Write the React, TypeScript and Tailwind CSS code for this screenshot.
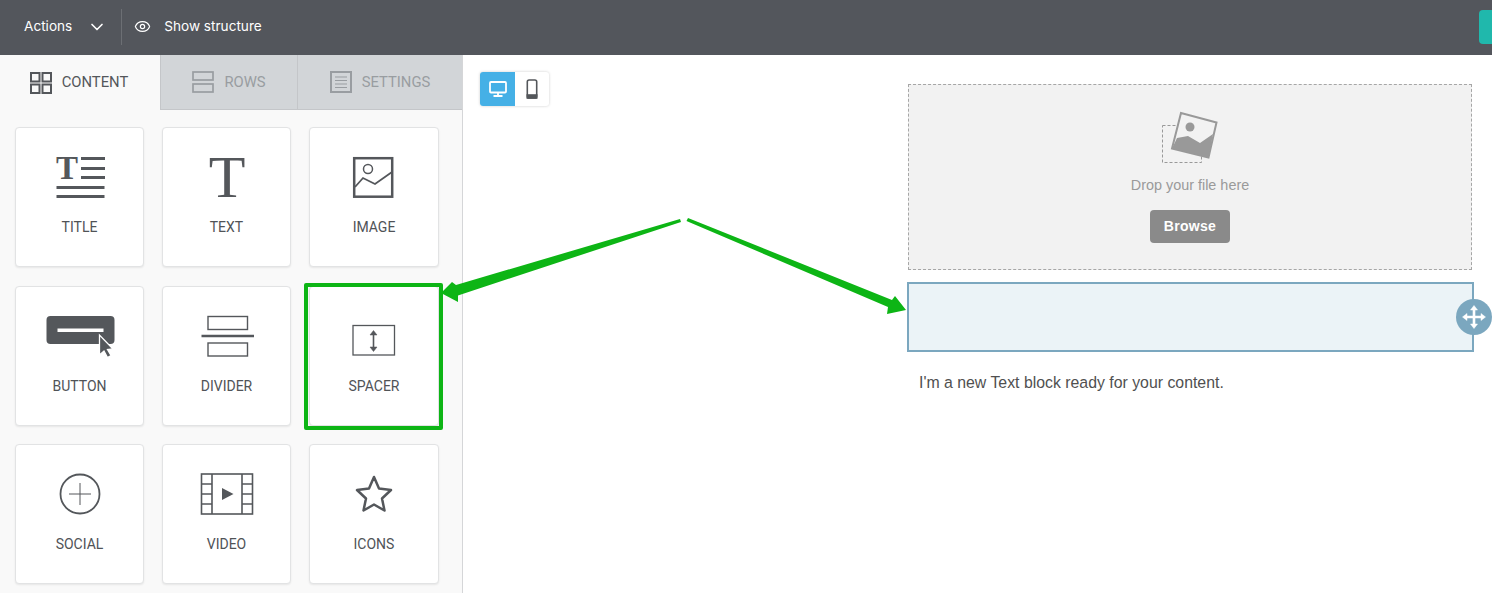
import { ChevronDown, Eye } from 'lucide-react';
import type { ReactNode } from 'react';

const INK = '#54575b';

function TitleIcon() {
  return (
    <svg width="80" height="60" fill={INK} className="overflow-visible">
      <text x="16" y="32" fontFamily="'Liberation Serif', serif" fontWeight="700" fontSize="33">T</text>
      <rect x="41" y="10" width="24" height="3" />
      <rect x="41" y="20" width="24" height="3" />
      <rect x="41" y="29" width="24" height="3" />
      <rect x="16.5" y="39" width="48" height="3" />
      <rect x="16.5" y="48" width="48" height="3" />
    </svg>
  );
}

function TextIcon() {
  return (
    <svg width="80" height="60" fill={INK} className="overflow-visible">
      <text x="40" y="50" textAnchor="middle" fontFamily="'Liberation Serif', serif" fontSize="60">T</text>
    </svg>
  );
}

function ImageIcon() {
  return (
    <svg width="80" height="60" fill="none" stroke={INK}>
      <rect x="20.2" y="11.2" width="38" height="38.5" strokeWidth="2.5" />
      <circle cx="34" cy="22" r="4.5" strokeWidth="1.5" />
      <polyline points="21,40 29,31 41,37 58,25" strokeWidth="1.8" />
    </svg>
  );
}

function ButtonIcon() {
  return (
    <svg width="80" height="60">
      <rect x="6.5" y="10" width="68" height="28" rx="4" fill={INK} />
      <rect x="17.5" y="22.5" width="46" height="3.5" fill="#fff" />
      <path d="M59.5 29 L59.5 49 L64 45 L67.5 51.5 L71 49.5 L67.5 43.5 L73 43 Z" fill={INK} stroke="#fff" strokeWidth="1.3" />
    </svg>
  );
}

function DividerIcon() {
  return (
    <svg width="80" height="60" fill="none" stroke={INK}>
      <rect x="21" y="10.5" width="39.5" height="13" strokeWidth="1.4" />
      <line x1="14.5" y1="30" x2="67" y2="30" strokeWidth="2.6" />
      <rect x="21" y="37" width="39.5" height="13" strokeWidth="1.4" />
    </svg>
  );
}

function SpacerIcon() {
  return (
    <svg width="80" height="60" fill="none" stroke={INK}>
      <rect x="19" y="19.5" width="41.5" height="29.5" strokeWidth="1.3" />
      <line x1="39.5" y1="27" x2="39.5" y2="43" strokeWidth="1.6" />
      <path d="M36 29 L39.5 24.5 L43 29 Z M36 41 L39.5 45.5 L43 41 Z" fill={INK} strokeWidth="0.5" />
    </svg>
  );
}

function SocialIcon() {
  return (
    <svg width="80" height="60" fill="none" stroke={INK}>
      <circle cx="40" cy="30" r="19.5" strokeWidth="1.8" />
      <line x1="29" y1="30" x2="51" y2="30" strokeWidth="1" />
      <line x1="40" y1="19" x2="40" y2="41" strokeWidth="1" />
    </svg>
  );
}

function VideoIcon() {
  return (
    <svg width="80" height="60" fill="none" stroke={INK} strokeWidth="1.6">
      <rect x="14.5" y="10" width="51" height="40" />
      <path d="M25 10 V50 M55 10 V50 M14.5 20 H25 M14.5 30 H25 M14.5 40 H25 M55 20 H65.5 M55 30 H65.5 M55 40 H65.5" />
      <path d="M35 24 L46.5 30 L35 36 Z" fill={INK} stroke="none" />
    </svg>
  );
}

function StarIcon() {
  return (
    <svg width="80" height="60" fill="none" stroke={INK}>
      <polygon points="40,13 45,24.5 57,26 48,34.5 50.5,46.5 40,40.5 29.5,46.5 32,34.5 23,26 35,24.5" strokeWidth="2.5" strokeLinejoin="round" />
    </svg>
  );
}

function Card({ label, icon, selected }: { label: string; icon: ReactNode; selected?: boolean }) {
  return (
    <div className="relative h-[140px] rounded-[4px] border border-[#e2e3e4] bg-white pt-[19px] flex flex-col items-center shadow-[0_1px_2px_rgba(0,0,0,0.08)]">
      {icon}
      <div className="mt-[10px] text-[14px] leading-5 text-[#505357]">{label}</div>
      {selected && <div className="absolute -left-[6px] -right-[5px] -top-[4px] -bottom-[5px] rounded-[2px] border-4 border-[#0db515]" />}
    </div>
  );
}

function Tab({ label, icon, active, className }: { label: string; icon: ReactNode; active?: boolean; className: string }) {
  return (
    <div className={`flex items-center justify-center gap-[10px] text-[14.8px] ${active ? 'bg-[#f9f9f9] text-[#54575b]' : 'bg-[#d2d5d8] text-[#999da1] border-b border-[#c4c6c9]'} ${className}`}>
      {icon}
      <span>{label}</span>
    </div>
  );
}

export default function App() {
  return (
    <div className="relative h-[593px] w-[1492px] overflow-hidden bg-white font-['Roboto',sans-serif]">
      {/* top bar */}
      <div className="flex h-[55px] items-center bg-[#53565c] pb-[2px] pl-[24px] pr-0 text-[13.6px] text-white font-['Inter',sans-serif]">
        <span>Actions</span>
        <ChevronDown className="ml-[15px] text-white" size={20} strokeWidth={2} />
        <div className="ml-[14px] h-[36px] w-px bg-[#6c6f74]" />
        <Eye className="ml-[12px] text-white" size={17} strokeWidth={1.7} />
        <span className="ml-[13px]">Show structure</span>
        <div className="ml-auto h-[34px] w-[13px] rounded-l-[4px] bg-[#20b8ac]" />
      </div>

      <div className="flex h-[538px]">
        {/* sidebar */}
        <div className="w-[463px] shrink-0 border-r border-[#d5d6d8] bg-[#f9f9f9]">
          <div className="flex h-[55px]">
            <Tab
              active
              label="CONTENT"
              className="w-[160px] pr-[2px]"
              icon={
                <svg width="22" height="22" fill="none" stroke="#54575b" strokeWidth="2">
                  <rect x="1" y="1" width="8.5" height="8.5" />
                  <rect x="12.5" y="1" width="8.5" height="8.5" />
                  <rect x="1" y="12.5" width="8.5" height="8.5" />
                  <rect x="12.5" y="12.5" width="8.5" height="8.5" />
                </svg>
              }
            />
            <Tab
              label="ROWS"
              className="w-[137px] border-l border-[#c4c6c9]"
              icon={
                <svg width="22" height="22" fill="none" stroke="#999da1" strokeWidth="1.7">
                  <rect x="1" y="1" width="20" height="8" />
                  <rect x="1" y="13" width="20" height="8" />
                </svg>
              }
            />
            <Tab
              label="SETTINGS"
              className="w-[165px] border-l border-[#c4c6c9]"
              icon={
                <svg width="22" height="22" fill="none" stroke="#999da1">
                  <rect x="1" y="1" width="20" height="20" strokeWidth="2" />
                  <path d="M5 6 H17 M5 9.5 H17 M5 13 H17 M5 16.5 H17" strokeWidth="1" />
                </svg>
              }
            />
          </div>
          <div className="grid grid-cols-[129px_129px_130px] gap-x-[18px] gap-y-[18.5px] pl-[15px] pt-[17px]">
            <Card label="TITLE" icon={<TitleIcon />} />
            <Card label="TEXT" icon={<TextIcon />} />
            <Card label="IMAGE" icon={<ImageIcon />} />
            <Card label="BUTTON" icon={<ButtonIcon />} />
            <Card label="DIVIDER" icon={<DividerIcon />} />
            <Card label="SPACER" icon={<SpacerIcon />} selected />
            <Card label="SOCIAL" icon={<SocialIcon />} />
            <Card label="VIDEO" icon={<VideoIcon />} />
            <Card label="ICONS" icon={<StarIcon />} />
          </div>
        </div>

        {/* canvas */}
        <div className="flex flex-1 items-start pl-[17px] pt-[17px]">
          <div className="flex h-[34px] w-[69px] overflow-hidden rounded-[3px] bg-white shadow-[0_0_3px_rgba(0,0,0,0.2)]">
            <div className="flex w-[35px] items-center justify-center bg-[#45b0e6]">
              <svg width="20" height="18" fill="none" stroke="#fff" strokeWidth="1.8">
                <rect x="2" y="2" width="16" height="10.5" rx="1" />
                <path d="M10 13 V15.5 M5.5 16 H14.5" />
              </svg>
            </div>
            <div className="flex w-[34px] items-center justify-center">
              <svg width="12" height="20" fill="none" stroke="#54575b" strokeWidth="1.6">
                <rect x="1.3" y="1" width="9.4" height="18" rx="1.8" />
                <rect x="1.3" y="16" width="9.4" height="3" fill="#54575b" />
              </svg>
            </div>
          </div>

          <div className="ml-[358px] w-[567px] pt-[12px] font-['Liberation_Sans',sans-serif]">
            <div className="ml-px flex h-[186px] w-[564px] flex-col items-center border border-dashed border-[#a6a6a6] bg-[#f2f2f2] pt-[25px]">
              <svg width="60" height="56" fill="none">
                <rect x="2.5" y="15.5" width="39" height="37" stroke="#999" strokeWidth="1" strokeDasharray="3 2" />
                <polygon points="21,3 56.5,12.5 48.5,47.5 12,38.5" fill="#f2f2f2" stroke="#999" strokeWidth="2" />
                <polygon points="17,28 28,26 40,33 53,24 48.5,47.5 12,38.5" fill="#999" />
                <circle cx="30" cy="17" r="4.5" fill="#999" />
              </svg>
              <div className="mt-[9px] text-[14.4px] leading-5 text-[#9a9a9a]">Drop your file here</div>
              <div className="mt-[15px] flex h-[33px] w-[80px] items-center justify-center rounded-[4px] bg-[#8a8a8a] text-[14px] font-bold tracking-[0.3px] text-white">
                Browse
              </div>
            </div>
            <div className="relative mt-[12px] h-[70px] border-2 border-[#7ba7bf] bg-[#ebf3f7]">
              <div className="absolute -right-[20px] top-[15px] flex h-[36px] w-[36px] items-center justify-center rounded-full bg-[#7ba7bf]">
                <svg width="26" height="26" fill="#fff" stroke="#fff">
                  <path d="M13 4 V22 M4 13 H22" strokeWidth="2.6" />
                  <path d="M9.5 6 L13 1.5 L16.5 6 Z M9.5 20 L13 24.5 L16.5 20 Z M6 9.5 L1.5 13 L6 16.5 Z M20 9.5 L24.5 13 L20 16.5 Z" strokeWidth="0.5" />
                </svg>
              </div>
            </div>
            <div className="mt-[19px] pl-[12px] text-[15.85px] leading-6 text-[#505050]">I'm a new Text block ready for your content.</div>
          </div>
        </div>
      </div>

      {/* annotation arrows */}
      <svg className="pointer-events-none absolute left-0 top-0" width="1492" height="593" fill="#0db515">
        <polygon points="680,219 456,285 452,282 441,293 458,302 458,295.5 681,222" />
        <polygon points="688,218 892,300 895,296 906,310 887,314 888,307 686.5,221" />
      </svg>
    </div>
  );
}
